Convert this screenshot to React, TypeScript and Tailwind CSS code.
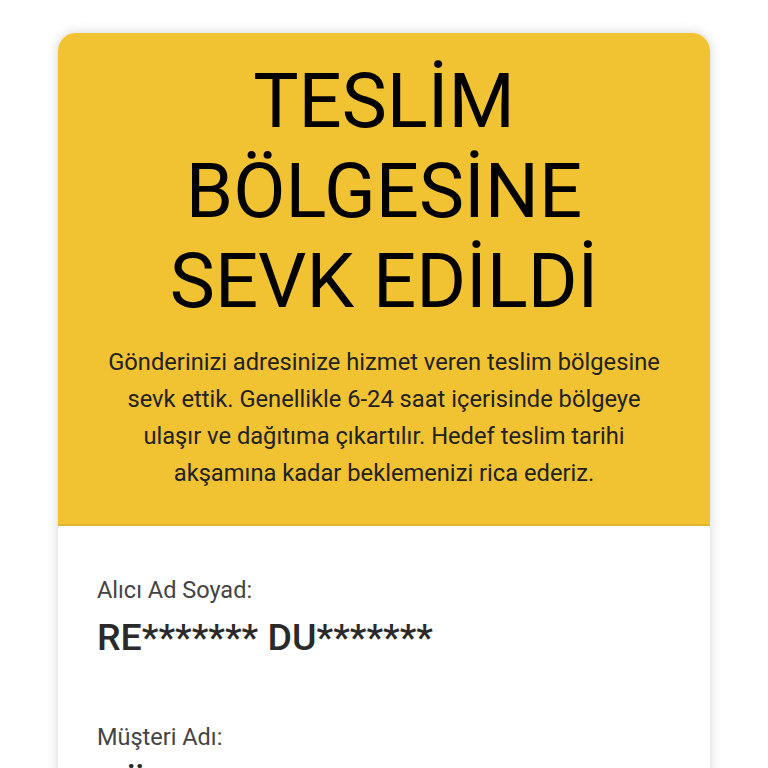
import React from "react";

export default function App() {
  return (
    <div className="min-h-[768px] h-[768px] overflow-hidden bg-white pt-[33px] px-[58px]" style={{ fontFamily: "Roboto, 'Noto Sans', sans-serif" }}>
      <div className="w-[652px] rounded-t-[18px] bg-white shadow-[0_0_12px_rgba(0,0,0,0.18)] overflow-hidden">
        <div className="bg-[#f1c232] border-b-2 border-[#e2b52e] pt-[23px] pb-[32px] px-[30px] text-center">
          <h1 className="text-[76px] leading-[90px] font-normal text-black">
            TESLİM
            <br />
            BÖLGESİNE
            <br />
            SEVK EDİLDİ
          </h1>
          <p className="mt-[18px] mx-auto max-w-[568px] text-[23.7px] leading-[37px] text-[#222]">
            Gönderinizi adresinize hizmet veren teslim bölgesine sevk ettik. Genellikle 6-24 saat içerisinde bölgeye ulaşır ve dağıtıma çıkartılır. Hedef teslim tarihi akşamına kadar beklemenizi rica ederiz.
          </p>
        </div>
        <div className="px-[39px] pt-[49px] pb-[40px]">
          <div className="flex flex-col">
            <div className="text-[23.5px] leading-[30px] text-[#444]">Alıcı Ad Soyad:</div>
            <div className="mt-[10px] text-[37.5px] leading-[44px] font-medium text-[#2a2a2a]">RE******* DU*******</div>
          </div>
          <div className="flex flex-col mt-[63px]">
            <div className="text-[23.5px] leading-[30px] text-[#444]">Müşteri Adı:</div>
            <div className="mt-[10px] text-[37.5px] leading-[44px] font-medium text-[#2a2a2a]">GÖKHAN</div>
          </div>
        </div>
      </div>
    </div>
  );
}
